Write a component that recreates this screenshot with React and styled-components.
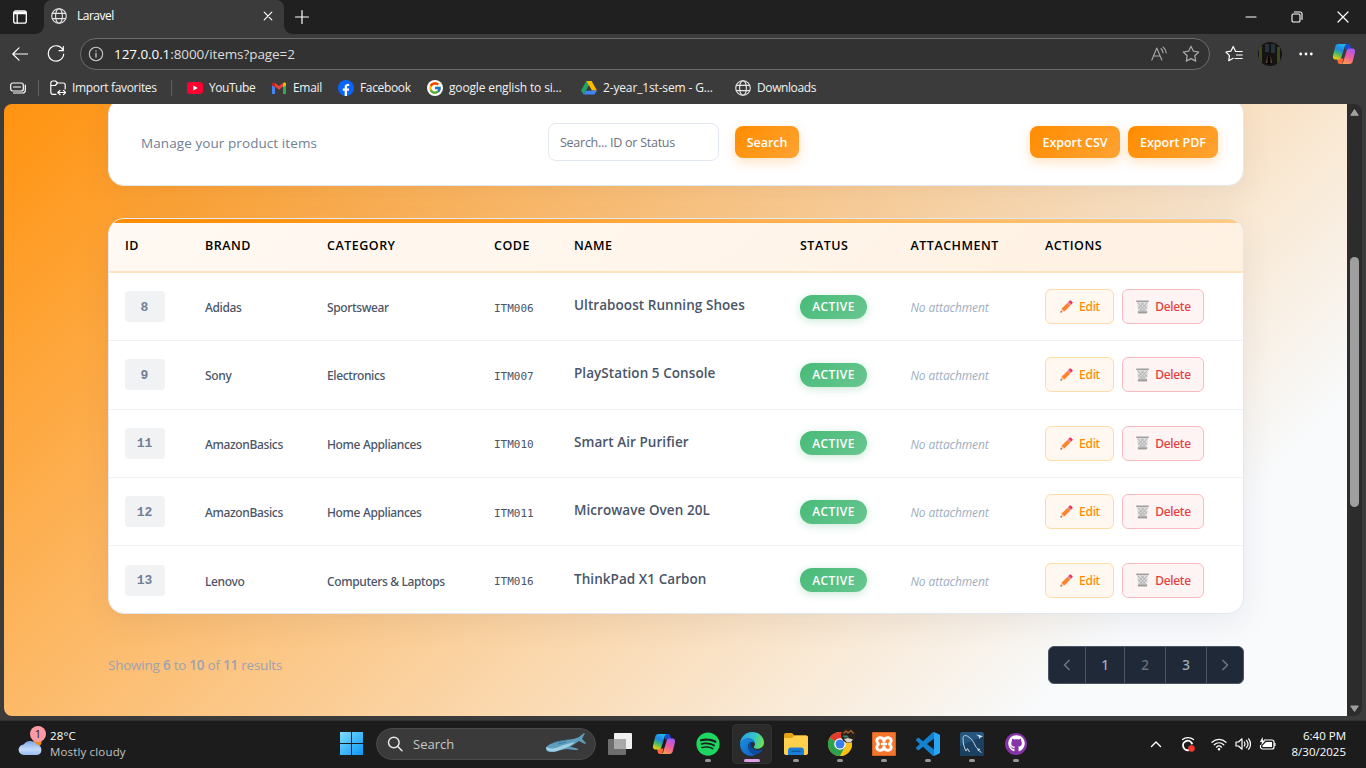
import React from "react";
import styled, { createGlobalStyle, css } from "styled-components";
import { FaSpotify, FaGithub, FaFacebookF } from "react-icons/fa";
import { FcGoogle } from "react-icons/fc";

const Global = createGlobalStyle`
  * { box-sizing: border-box; }
  body { margin: 0; overflow: hidden; background: #3b3b3b; }
  svg { display: block; flex: none; }
`;

const sans = `"Open Sans", "Noto Sans", sans-serif`;
const medium = `"Noto Sans", "Open Sans", sans-serif`;

const Desktop = styled.div`
  width: 1366px;
  height: 768px;
  display: flex;
  flex-direction: column;
  overflow: hidden;
  background: #3b3b3b;
  color: #fff;
  font-family: ${sans};
  font-stretch: 92%;
  font-size: 12px;
  white-space: nowrap;
`;

/* ---------- browser chrome ---------- */

const TitleBar = styled.div`
  height: 34px;
  flex: none;
  display: flex;
  background: #202020;
`;

const Slot = styled.div`
  width: ${(p) => p.$w}px;
  flex: none;
  display: flex;
  align-items: center;
  justify-content: center;
`;

const Tab = styled.div`
  width: 240px;
  display: flex;
  align-items: center;
  padding: 0 10px 2px 7px;
  background: #3b3b3b;
  border-radius: 8px 8px 0 0;
  position: relative;
  &::before,
  &::after {
    content: "";
    position: absolute;
    bottom: 0;
    width: 8px;
    height: 8px;
  }
  &::before {
    left: -8px;
    background: radial-gradient(circle at 0 0, transparent 7.5px, #3b3b3b 8px);
  }
  &::after {
    right: -8px;
    background: radial-gradient(circle at 100% 0, transparent 7.5px, #3b3b3b 8px);
  }
`;

const TabTitle = styled.span`
  flex: 1;
  margin-left: 10px;
  padding-bottom: 2px;
  font-size: 12px;
  letter-spacing: -0.5px;
`;

const Spacer = styled.div`
  flex: 1;
`;

const ToolBar = styled.div`
  height: 40px;
  flex: none;
  display: flex;
  align-items: center;
`;

const AddressBar = styled.div`
  width: 1130px;
  height: 32px;
  display: flex;
  align-items: center;
  border: 1px solid #6c6c6c;
  border-radius: 16px;
  background: #323232;
  padding: 0 9px 0 7px;
`;

const Url = styled.span`
  flex: 1;
  margin-left: 10px;
  font-size: 13.5px;
  letter-spacing: -0.08px;
  color: #dcdcdc;
  b {
    font-weight: 400;
    color: #fff;
  }
`;

const Favorites = styled.div`
  height: 30px;
  flex: none;
  display: flex;
  align-items: center;
  padding-bottom: 3px;
`;

const Favorite = styled.div`
  width: ${(p) => p.$w}px;
  flex: none;
  display: flex;
  align-items: center;
  gap: 6px;
  font-size: 12px;
  color: #f2f2f2;
  letter-spacing: ${(p) => p.$ls || -0.15}px;
`;

const Divider = styled.div`
  width: 1px;
  height: 16px;
  margin: 0 ${(p) => p.$r}px 0 ${(p) => p.$l}px;
  background: #616161;
`;

const FacebookDisc = styled.div`
  width: 16px;
  height: 16px;
  border-radius: 50%;
  background: #0866ff;
  display: flex;
  justify-content: center;
  align-items: flex-end;
`;

const GoogleDisc = styled.div`
  width: 16px;
  height: 16px;
  border-radius: 50%;
  background: #fff;
  display: flex;
  justify-content: center;
  align-items: center;
`;

const Avatar = styled.div`
  width: 24px;
  height: 24px;
  border-radius: 50%;
  overflow: hidden;
`;

/* ---------- page ---------- */

const Window = styled.div`
  height: 612px;
  flex: none;
  margin: 0 4px;
  display: flex;
  border-radius: 8px;
  overflow: hidden;
`;

const Page = styled.div`
  width: 1343px;
  height: 612px;
  overflow: hidden;
  padding: 0 103px 0 104px;
  display: flex;
  flex-direction: column;
  background: linear-gradient(135deg, #ff9310 0%, #f8fafc 84%);
`;

const ScrollTrack = styled.div`
  width: 15px;
  padding: 4px 0 3px;
  display: flex;
  flex-direction: column;
  align-items: center;
  background: #2c2c2c;
`;

const ScrollThumb = styled.div`
  width: 9px;
  height: 250px;
  flex: none;
  margin: 141px 0 198px;
  border-radius: 5px;
  background: #9f9f9f;
`;

const card = css`
  width: 1136px;
  flex: none;
  background: #fff;
  border: 1px solid #e2e8f0;
  border-radius: 16px;
  box-shadow: 0 8px 32px rgba(45, 55, 72, 0.08);
`;

const HeaderCard = styled.section`
  ${card}
  height: 88px;
  margin-top: -6px;
  display: flex;
  align-items: center;
  padding: 0 25px 0 32px;
`;

const Subtitle = styled.p`
  width: 407px;
  margin: 0;
  padding-top: 1px;
  color: #718096;
  font-size: 13.5px;
  letter-spacing: 0.08px;
`;

const SearchField = styled.div`
  width: 171px;
  height: 38px;
  margin-right: 16px;
  padding: 0 11px;
  display: flex;
  align-items: center;
  border: 1px solid #e2e8f0;
  border-radius: 8px;
  color: #6b7280;
  font-size: 12.5px;
  letter-spacing: -0.26px;
`;

const PrimaryButton = styled.button`
  width: ${(p) => p.$w}px;
  height: 32px;
  margin: 0 0 0 ${(p) => p.$ml || 0}px;
  padding: 0;
  border: 0;
  border-radius: 8px;
  background: linear-gradient(135deg, #ff8c00, #ffa333);
  box-shadow: 0 4px 12px rgba(255, 140, 0, 0.25);
  color: #fff;
  font: 600 12.5px ${sans};
  font-stretch: 92%;
  letter-spacing: -0.05px;
`;

const TableCard = styled.section`
  ${card}
  height: 396px;
  margin-top: 32px;
  overflow: hidden;
  display: flex;
  flex-direction: column;
`;

const Accent = styled.div`
  height: 4px;
  flex: none;
  background: linear-gradient(90deg, #ff8c00, #ffa333 40%, #ffcc88);
`;

const rowGrid = css`
  display: grid;
  grid-template-columns: 80px 122px 167px 80px 226px 110.5px 134.5px 1fr;
  align-items: center;
  flex: none;
`;

const HeadRow = styled.div`
  ${rowGrid}
  height: 50px;
  padding-bottom: 3px;
  background: linear-gradient(135deg, #fff9f3, #fff1e2);
  border-bottom: 2px solid #ffe3bf;
  color: #000;
  font-size: 12.5px;
  font-weight: 600;
  letter-spacing: 0.5px;
`;

const Row = styled.div`
  ${rowGrid}
  height: 68.3px;
  border-bottom: 1px solid #f0f3f7;
  &:last-child {
    border-bottom: 0;
  }
`;

const Cell = styled.div`
  padding-left: 16px;
`;

const TextCell = styled(Cell)`
  padding-top: 2px;
  color: #4a5568;
  font-family: ${medium};
  font-size: 12px;
  font-weight: 500;
  letter-spacing: -0.36px;
`;

const CodeCell = styled(Cell)`
  padding-top: 3px;
  color: #4a5568;
  font: 11px "DejaVu Sans Mono", monospace;
`;

const NameCell = styled(Cell)`
  padding-bottom: 3px;
  color: #4a5568;
  font-size: 13.5px;
  font-weight: 600;
  letter-spacing: 0.06px;
`;

const EmptyCell = styled(Cell)`
  padding-top: 2px;
  color: #a0aec0;
  font-size: 12px;
  font-style: italic;
  letter-spacing: -0.1px;
`;

const IdBadge = styled.div`
  width: 40px;
  height: 31px;
  padding: 1px 1px 0 0;
  display: flex;
  align-items: center;
  justify-content: center;
  border-radius: 4px;
  background: #f1f2f4;
  color: #718096;
  font: bold 13px "Liberation Mono", monospace;
`;

const StatusBadge = styled.div`
  width: 67px;
  height: 24px;
  display: flex;
  align-items: center;
  justify-content: center;
  border-radius: 12px;
  background: linear-gradient(135deg, #48bb78, #68c690);
  box-shadow: 0 2px 8px rgba(72, 187, 120, 0.3);
  color: #fff;
  font-size: 12px;
  font-weight: 600;
  letter-spacing: 0.4px;
`;

const Actions = styled(Cell)`
  display: flex;
  gap: 8px;
`;

const ActionButton = styled.button`
  width: ${(p) => (p.$danger ? 82 : 69)}px;
  height: 35px;
  padding: 0 0 0 1px;
  display: flex;
  align-items: center;
  justify-content: center;
  gap: 6px;
  border: 1px solid ${(p) => (p.$danger ? "#f8bcc0" : "#ffdba8")};
  border-radius: 6px;
  background: ${(p) => (p.$danger ? "#fef4f4" : "#fff8f0")};
  color: ${(p) => (p.$danger ? "#e53e3e" : "#ff8c00")};
  font: 500 12px ${medium};
  letter-spacing: -0.3px;
`;

const Footer = styled.div`
  width: 1136px;
  margin-top: 32px;
  display: flex;
  align-items: center;
  justify-content: space-between;
`;

const Showing = styled.p`
  margin: 0;
  color: #9ca3af;
  font-size: 13.5px;
  letter-spacing: -0.24px;
  b {
    font-weight: 600;
  }
`;

const Pager = styled.div`
  height: 38px;
  display: flex;
  border: 1px solid #4b5563;
  border-radius: 6px;
  background: #1f2937;
  overflow: hidden;
`;

const PageCell = styled.div`
  width: ${(p) => p.$w}px;
  display: flex;
  align-items: center;
  justify-content: center;
  border-left: ${(p) => (p.$first ? 0 : 1)}px solid #4b5563;
  color: ${(p) => (p.$dim ? "#6b7280" : "#a3adbb")};
  font-family: ${medium};
  font-size: 13.5px;
  font-weight: 500;
`;

/* ---------- taskbar ---------- */

const Taskbar = styled.div`
  height: 48px;
  flex: none;
  margin-top: 4px;
  padding-bottom: 2px;
  display: flex;
  align-items: center;
  border-top: 1px solid #303030;
  background: #1c1c1c;
`;

const Weather = styled.div`
  width: 330px;
  padding-left: 18px;
  display: flex;
  align-items: center;
  gap: 6px;
`;

const Stack = styled.div`
  display: flex;
  flex-direction: column;
  align-items: ${(p) => (p.$end ? "flex-end" : "flex-start")};
  font-size: 11.5px;
  line-height: 16px;
  letter-spacing: ${(p) => (p.$end ? 0 : 0.16)}px;
  span + span {
    color: ${(p) => (p.$end ? "#fff" : "#c3c3c3")};
  }
`;

const WeatherIcon = styled.div`
  position: relative;
  width: 26px;
  height: 34px;
  padding-top: 11px;
`;

const Badge = styled.span`
  position: absolute;
  left: 12px;
  top: -1px;
  width: 16px;
  height: 16px;
  border-radius: 50%;
  background: #ff99a4;
  color: #1c1c1c;
  text-align: center;
  font-size: 11px;
  line-height: 16px;
`;

const SearchPill = styled.div`
  width: 220px;
  height: 32px;
  margin: 0 3px 0 4px;
  padding: 0 8px 0 10px;
  display: flex;
  align-items: center;
  border-radius: 16px;
  border: 1px solid #4a4a4a;
  background: #3a3a3a;
  color: #c8c8c8;
  font-size: 13px;
  span {
    flex: 1;
    margin-left: 10px;
  }
`;

const AppButton = styled.div`
  width: 40px;
  height: 40px;
  margin: 0 2px;
  flex: none;
  display: flex;
  flex-direction: column;
  align-items: center;
  justify-content: flex-end;
  border-radius: 5px;
  ${(p) =>
    p.$active &&
    css`
      background: #2b2b2b;
      box-shadow: inset 0 0 0 1px #333;
    `}
`;

const Glyph = styled.div`
  height: 24px;
  display: flex;
  align-items: center;
  justify-content: center;
  margin-bottom: 3px;
`;

const Mark = styled.div`
  width: ${(p) => (p.$active ? 16 : 6)}px;
  height: 3px;
  margin-bottom: 2px;
  border-radius: 2px;
  background: ${(p) => (p.$active ? "#e0a0e4" : "#979797")};
`;

const Tray = styled.div`
  display: flex;
  align-items: center;
  margin-right: 20px;
`;

const GithubDisc = styled.div`
  width: 22px;
  height: 22px;
  border-radius: 50%;
  background: #8534a8;
  display: flex;
  align-items: center;
  justify-content: center;
`;

/* ---------- drawings ---------- */

const Line = ({ size = 16, w = 1.2, color = "#fff", children, vb = 16 }) => (
  <svg width={size} height={size} viewBox={`0 0 ${vb} ${vb}`} fill="none" stroke={color}
    strokeWidth={w} strokeLinecap="round" strokeLinejoin="round">
    {children}
  </svg>
);

const Globe = ({ color = "#e6e6e6" }) => (
  <Line color={color} w={1.1}>
    <circle cx="8" cy="8" r="7.3" />
    <ellipse cx="8" cy="8" rx="3.4" ry="7.3" />
    <path d="M1.4 5.4h13.2M1.4 10.6h13.2" />
  </Line>
);

const Copilot = ({ size = 24, id }) => (
  <svg width={size} height={size} viewBox="0 0 24 24">
    <defs>
      <linearGradient id={`${id}a`} x1="0.6" y1="0" x2="0.2" y2="1">
        <stop offset="0" stopColor="#1bb6ee" />
        <stop offset=".35" stopColor="#1e86e6" />
        <stop offset=".62" stopColor="#42b96e" />
        <stop offset="1" stopColor="#ffd000" />
      </linearGradient>
      <linearGradient id={`${id}b`} x1="0.7" y1="0" x2="0.3" y2="1">
        <stop offset="0" stopColor="#a45af5" />
        <stop offset=".5" stopColor="#ee5aa0" />
        <stop offset="1" stopColor="#ff9a4a" />
      </linearGradient>
    </defs>
    <path d="M12.500 2h3.700c1.200 0 1.800.7 2.100 1.600L19.400 7.500H13z" fill="#1c49cf" />
    <path d="M5 16.500h6.500L10 22H7.800c-1.100 0-1.700-.7-2-1.700z" fill="#ff6a3c" />
    <path d="M6.300 2H15c-1.200 0-1.800.8-2.200 2L9.300 15.500c-.4 1.200-1.200 2-2.500 2H3.500C1.300 17.500.6 15.600 1 13.800L3.300 4.500C3.700 3 4.800 2 6.300 2z" fill={`url(#${id}a)`} />
    <path d="M17.700 22H9c1.200 0 1.800-.8 2.200-2l3.500-11.500c.4-1.200 1.200-2 2.500-2h3.300c2.200 0 2.900 1.900 2.500 3.700l-2.300 9.300c-.4 1.500-1.500 2.500-3 2.500z" fill={`url(#${id}b)`} />
  </svg>
);

const Pencil = () => (
  <svg width="13" height="13" viewBox="0 0 15 15">
    <path d="M.5 14.500l1.200-4.500L5 13.300z" fill="#f7c9a0" />
    <path d="M.5 14.500l.5-2 1.500 1.500z" fill="#444" />
    <path d="M1.700 10l6.800-6.600 3.200 3.200L5 13.300z" fill="#ff822d" />
    <path d="M8.500 3.400l1.300-1.300 3.200 3.200-1.300 1.300z" fill="#d98a9a" />
    <path d="M9.800 2.100L11 .9c.6-.6 1.200-.6 1.800 0l1.400 1.400c.6.600.6 1.200 0 1.800L13 5.300z" fill="#f2315f" />
  </svg>
);

const Trash = () => (
  <svg width="13" height="14" viewBox="0 0 13 14">
    <path d="M1.200 1.800h10.600l-.9 11H2.100z" fill="#dedede" />
    <path d="M1.500 2.500l8.500 9M5 2.500l6 6M2 6.500l5 5M11.500 2.500L3 11.500M8 2.500L2.500 8.500M11 6.500l-5 5" stroke="#a6a6a6" strokeWidth=".8" />
    <path d="M.2.500h12.600V2H.2z" fill="#a0a0a0" />
    <path d="M1.900 11.400h9.200v2H1.900z" fill="#9b9b9b" />
  </svg>
);

const Edge = () => (
  <svg width="24" height="24" viewBox="0 0 24 24">
    <defs>
      <linearGradient id="eg1" x1="0" y1=".3" x2="1" y2=".5">
        <stop offset="0" stopColor="#2a9fe6" />
        <stop offset=".55" stopColor="#33c4cf" />
        <stop offset="1" stopColor="#6ee04f" />
      </linearGradient>
      <linearGradient id="eg2" x1="0" y1="0" x2="1" y2="1">
        <stop offset="0" stopColor="#1b8fe0" />
        <stop offset="1" stopColor="#0f5fc0" />
      </linearGradient>
    </defs>
    <path d="M0 12C.3 5 5.500 0 12 0c7 0 12 5 12 10.500 0 3.800-3 6.300-6.500 6.300-2.300 0-3.800-.8-3.800-1.600 0-.6 1.300-1.200 1.300-3.200C15 9 12 6.500 8.500 6.500 4 6.500.8 9.200 0 12z" fill="url(#eg1)" />
    <path d="M0 12c.8-3.500 4-5.800 8.300-5.800 3.800 0 6.500 2.400 6.700 5.400-.9-1.300-2.300-1.800-3.500-1.500-2.700.6-4.200 3.400-3 6.900 1.200 3.600 4.300 5.300 7.300 5.300-1.200 1.200-3 1.700-4.300 1.700C5 24 0 19 0 12z" fill="url(#eg2)" />
    <path d="M8.200 14c.2-2.300 1.600-3.700 3.200-3.900-1.300 2-.7 5 1.800 6.700 3 2 6.200 1.500 8.600.5.600-.3 1 .2.600.7-2 3-4.700 4.600-7.500 4.500-4.200-.2-7-4.200-6.700-8.500z" fill="#0c4b9e" />
  </svg>
);

const Folder = () => (
  <svg width="24" height="22" viewBox="0 0 24 22">
    <path d="M0 2C0 .8.800 0 2 0h6l2.500 2.500H22c1.200 0 2 .8 2 2V8H0z" fill="#e6a214" />
    <path d="M0 5h8l2.500-2.500H22c1.200 0 2 .8 2 2V20c0 1.200-.8 2-2 2H2c-1.200 0-2-.8-2-2z" fill="#ffd04c" />
    <path d="M4 22v-4.500C4 15.500 5.200 14.500 7 14.500h10c1.800 0 3 1 3 3V22z" fill="#1a7fd4" />
    <path d="M8 18.300h8" stroke="#0b5ca8" strokeWidth="1.500" strokeLinecap="round" />
  </svg>
);

const Chrome = () => (
  <svg width="32" height="32" viewBox="0 0 32 32">
    <g transform="translate(4 4)">
      <circle cx="12" cy="12" r="12" fill="#fbc116" />
      <path d="M12 12L1.600 6A12 12 0 0 1 22.400 6z" fill="#e33b2e" />
      <path d="M1.600 6A12 12 0 0 0 12 24l5.200-9-5.200-3z" fill="#2da14c" />
      <path d="M12 6.500h10.700A12 12 0 0 1 12 24l4.900-9z" fill="#fbc116" />
      <circle cx="12" cy="12" r="5.800" fill="#fff" />
      <circle cx="12" cy="12" r="4.500" fill="#3b7ded" />
    </g>
    <circle cx="24.500" cy="7.500" r="7.500" fill="#2a2019" />
    <path d="M19.500 5.500l2.500-2.500 2 2 3-2.500 2.500 3" stroke="#b06a2c" strokeWidth="1.200" fill="none" />
    <path d="M18.500 7.500h4.500l2 2h-5z" fill="#3c8f6d" />
    <path d="M20 11l4-1 5 1.500-2.500 3h-3.500z" fill="#d9d5cc" />
  </svg>
);

const Xampp = () => (
  <svg width="24" height="24" viewBox="0 0 24 24">
    <rect width="24" height="24" rx="1.500" fill="#f3762d" />
    <rect x=".5" y=".5" width="23" height="23" rx="1" fill="none" stroke="#d9611f" />
    <path d="M12 9.200C12 4.800 4.800 4.500 4.800 8.700c0 1.800 1.500 2.100 1.500 3.300s-1.500 1.500-1.500 3.300c0 4.200 7.200 3.900 7.200-.5 0 4.400 7.200 4.700 7.200.5 0-1.800-1.500-2.100-1.500-3.300s1.500-1.500 1.500-3.300c0-4.200-7.200-3.900-7.200.5z" fill="none" stroke="#fff" strokeWidth="3" strokeLinejoin="round" />
    <path d="M10 12h4" stroke="#fff" strokeWidth="2.600" strokeLinecap="round" />
  </svg>
);

const VsCode = () => (
  <svg width="24" height="24" viewBox="0 0 24 24">
    <path fill="#1283d0" d="M23.150 2.587L18.210.210a1.494 1.494 0 0 0-1.705.290l-9.460 8.630-4.120-3.128a.999.999 0 0 0-1.276.057L.327 7.261A1 1 0 0 0 .326 8.740L3.899 12 .326 15.260a1 1 0 0 0 .001 1.479L1.650 17.940a.999.999 0 0 0 1.276.057l4.120-3.128 9.460 8.630a1.492 1.492 0 0 0 1.704.290l4.942-2.377A1.500 1.500 0 0 0 24 20.060V3.939a1.500 1.500 0 0 0-.850-1.352zm-5.146 14.861L10.826 12l7.178-5.448v10.896z" />
    <path fill="#2ba4f2" d="M23.150 2.587L18.210.210c-.1-.1-.2-.1-.206 0v23.580l.206 0 4.940-2.377A1.500 1.500 0 0 0 24 20.060V3.939a1.500 1.500 0 0 0-.850-1.352z" />
  </svg>
);

const Workbench = () => (
  <svg width="24" height="24" viewBox="0 0 24 24">
    <rect width="24" height="24" rx="2" fill="#24567f" />
    <path d="M0 14L24 4v18a2 2 0 0 1-2 2H2a2 2 0 0 1-2-2z" fill="#1a4062" />
    <path d="M6 19C4 15.500 3 11 3 6.500 3 3.500 5 3 7.500 4.200c4 2.300 6.500 6 8 10 .8 2 2.500 2.600 4.500 3.300l-2.500.3 4 2.700M6 19l1.500-2.500L9.500 20" fill="none" stroke="#d5e2ec" strokeWidth=".9" />
    <path d="M16 2.500l3 2.200v2.600l1.500-2L23 5l-2-1.500z" fill="#d5e2ec" />
  </svg>
);

const Shark = () => (
  <svg width="42" height="22" viewBox="0 0 42 22">
    <path d="M1 15c1-3 6-5 11-6l9-2c5-1 9-1 13-3l5-4c1 0 1 1 0 2l-2 4 4 4c0 1-2 1-3 0l-4-2-6 4-3 2c3 0 6 1 8 2 1 1-1 1-3 1l-8-1-6 1c-5 2-11 3-14 1-1-1-1-2-1-3z" fill="#5f9fbd" />
    <path d="M1 14c4 2 9 2 15-1 3-1 9-3 14-4-5 5-13 7-18 9-5 1-11 1-11-4z" fill="#9fd0e2" />
    <path d="M8 10c4-2 9-2 14-3M13 11l8-2" stroke="#3f7c9d" strokeWidth="1" fill="none" />
  </svg>
);

const Cloud = () => (
  <svg width="26" height="18" viewBox="0 0 26 18">
    <defs>
      <linearGradient id="cl" x1="0" y1="0" x2="0" y2="1">
        <stop offset="0" stopColor="#7fa6e8" />
        <stop offset=".6" stopColor="#c3dafb" />
        <stop offset="1" stopColor="#9abcf2" />
      </linearGradient>
    </defs>
    <circle cx="19.500" cy="4" r="4" fill="#f08a1d" />
    <path d="M6 17a5.200 5.200 0 0 1-.4-10.400A7.500 7.500 0 0 1 18.500 6.500 5.300 5.300 0 0 1 19 17z" fill="url(#cl)" />
  </svg>
);

const Windows = () => (
  <svg width="23" height="23" viewBox="0 0 23 23">
    <defs>
      <linearGradient id="wn" x1="0" y1="0" x2="1" y2="1">
        <stop offset="0" stopColor="#7fdcfc" />
        <stop offset="1" stopColor="#0a96f8" />
      </linearGradient>
    </defs>
    <path d="M0 0h11v11H0zM12 0h11v11H12zM0 12h11v11H0zM12 12h11v11H12z" fill="url(#wn)" />
  </svg>
);

const TaskView = () => (
  <svg width="24" height="22" viewBox="0 0 24 22">
    <rect x="6" y="0" width="18" height="16" rx="1" fill="#f0f0f0" />
    <rect x="0" y="6" width="18" height="16" rx="1" fill="#6e6e6e" />
    <rect x="6" y="6" width="12" height="10" fill="#a9a9a9" />
  </svg>
);

const YouTube = () => (
  <svg width="16" height="12" viewBox="0 0 16 12">
    <rect width="16" height="12" rx="3" fill="#ff0033" />
    <path d="M6.300 3.400v5.200L10.700 6z" fill="#fff" />
  </svg>
);

const Gmail = () => (
  <svg width="16" height="12" viewBox="0 0 16 12">
    <path d="M1 12V1.500L4 4v8z" fill="#4285f4" />
    <path d="M12 12V4l3-2.500V12z" fill="#34a853" />
    <path d="M4 4.500v-3.500l4 3 4-3v3.500l-4 3.200z" fill="#ea4335" />
    <path d="M1 2.500C.8.500 2.500-.2 4 1v4L1 3.500z" fill="#c5221f" />
    <path d="M15 2.500C15.200.500 13.500-.2 12 1v4l3-1.500z" fill="#fbbc04" />
  </svg>
);

const Drive = () => (
  <svg width="16" height="14" viewBox="0 0 16 14">
    <path d="M5.400 0h5.200L5 9.500l-2.500 4L0 9.500z" fill="#1ea362" />
    <path d="M5.400 0h5.200L16 9.500h-5.200z" fill="#ffba00" />
    <path d="M2.500 13.500L5 9.500h11l-2.500 4z" fill="#4285f4" />
    <path d="M8 4.600l2.800 4.900H5.200z" fill="#3b3b3b" />
  </svg>
);

const Star = ({ color = "#fff", list }) => (
  <Line size={18} vb={18} color={color} w={1.200}>
    {list ? (
      <path d="M10.500 6.300L8.200 1.500 5.900 6.200.9 7l3.600 3.600-.8 5.100 4.500-2.400M10.500 6.500h6.700M11.500 10h5.700M10 13.500h7.200" />
    ) : (
      <path d="M9 1.300l2.400 4.900 5.300.8-3.900 3.800.9 5.300L9 13.600l-4.700 2.500.9-5.300L1.300 7l5.300-.8z" />
    )}
  </Line>
);

const items = [
  ["8", "Adidas", "Sportswear", "ITM006", "Ultraboost Running Shoes"],
  ["9", "Sony", "Electronics", "ITM007", "PlayStation 5 Console"],
  ["11", "AmazonBasics", "Home Appliances", "ITM010", "Smart Air Purifier"],
  ["12", "AmazonBasics", "Home Appliances", "ITM011", "Microwave Oven 20L"],
  ["13", "Lenovo", "Computers & Laptops", "ITM016", "ThinkPad X1 Carbon"],
];

const columns = ["ID", "BRAND", "CATEGORY", "CODE", "NAME", "STATUS", "ATTACHMENT", "ACTIONS"];

const apps = [
  { id: "spotify", icon: <FaSpotify size={24} color="#1ed760" /> },
  { id: "edge", icon: <Edge />, active: true },
  { id: "files", icon: <Folder /> },
  { id: "chrome", icon: <Chrome /> },
  { id: "xampp", icon: <Xampp /> },
  { id: "code", icon: <VsCode /> },
  { id: "workbench", icon: <Workbench /> },
  { id: "github", icon: <GithubDisc><FaGithub size={17} color="#fff" /></GithubDisc> },
];

export default function App() {
  return (
    <Desktop>
      <Global />
      <TitleBar>
        <Slot $w={40}>
          <Line w={1.300}>
            <rect x="1.700" y="2" width="12.600" height="12.200" rx="2" />
            <path d="M2 4.700h12M2.500 3.500h11M5.200 5v9" />
          </Line>
        </Slot>
        <Slot $w={4} />
        <Tab>
          <Globe />
          <TabTitle>Laravel</TabTitle>
          <Line size={12} vb={12} w={1.200}><path d="M2.200 2.200l7.600 7.600M9.800 2.200L2.200 9.800" /></Line>
        </Tab>
        <Slot $w={35}>
          <Line><path d="M8 1.500v13M1.500 8h13" /></Line>
        </Slot>
        <Spacer />
        <Slot $w={46}><Line size={12} vb={12}><path d="M1 6h10" /></Line></Slot>
        <Slot $w={46}>
          <Line size={12} vb={12} w={1.100}>
            <rect x="1" y="3" width="8" height="8" rx="1.300" />
            <path d="M3.300 1h5.700a2 2 0 0 1 2 2v5.500" />
          </Line>
        </Slot>
        <Slot $w={46}><Line size={12} vb={12}><path d="M1 1l10 10M11 1L1 11" /></Line></Slot>
      </TitleBar>

      <ToolBar>
        <Slot $w={40}>
          <Line><path d="M.800 8h15M7 1.800L.800 8 7 14.200" /></Line>
        </Slot>
        <Slot $w={32}>
          <Line size={18} vb={18}><path d="M16 5.200A7.700 7.700 0 1 0 16.700 9M16.300 1.500v4.200h-4.200" /></Line>
        </Slot>
        <Slot $w={8} />
        <AddressBar>
          <Line color="#c9c9c9" w={1.100}>
            <circle cx="8" cy="8" r="6.700" />
            <path d="M8 7.300v3.700M8 5v.2" strokeWidth="1.300" />
          </Line>
          <Url><b>127.0.0.1</b>:8000/items?page=2</Url>
          <Slot $w={46}>
            <Line color="#a9a9a9" w={1.100}>
              <path d="M.8 14L5.800 2 10.800 14M2.400 10h6.800M10 2.700c1.200.9 1.800 2.300 1.900 3.900M12 1c1.800 1.400 2.900 3.400 3.200 5.900" />
            </Line>
          </Slot>
          <Star color="#a9a9a9" />
        </AddressBar>
        <Slot $w={48}><Star list /></Slot>
        <Slot $w={24}>
          <Avatar>
            <svg width="24" height="24" viewBox="0 0 24 24">
              <rect width="24" height="24" fill="#151412" />
              <path d="M1 4h3v18H1zM19 5h3v16h-3z" fill="#3c4a1e" />
              <path d="M7 2h4v8H7zM13 2h4v9h-4z" fill="#27333a" />
              <path d="M8 21c.5-5 1.500-7 3-8 1.500 1 2.500 3 3 8z" fill="#6b4630" />
              <path d="M9.500 22v-6l1.500-4 1.500 4v6z" fill="#050505" />
            </svg>
          </Avatar>
        </Slot>
        <Slot $w={48}>
          <svg width="14" height="4" viewBox="0 0 14 4" fill="#fff">
            <circle cx="1.700" cy="2" r="1.400" /><circle cx="7" cy="2" r="1.400" /><circle cx="12.300" cy="2" r="1.400" />
          </svg>
        </Slot>
        <Slot $w={28}><Copilot id="top" /></Slot>
      </ToolBar>

      <Favorites>
        <Slot $w={36}>
          <Line>
            <rect x=".700" y="3" width="12.600" height="8" rx="2" />
            <path d="M3.500 7h7M15.300 5v5.500a2.500 2.500 0 0 1-2.500 2.500H3.500" />
          </Line>
        </Slot>
        <Divider $l={2} $r={11} />
        <Favorite $w={109} $ls={-0.33}>
          <Line>
            <path d="M6 14.300H2.800a2 2 0 0 1-2-2V3a2 2 0 0 1 2-2h2.700l2 2h5.700a2 2 0 0 1 2 2v4M.8 5.500h4.500L7.500 3M8 12.500h7.500M10 10.300l-2.200 2.200L10 14.700M13.500 10.300l2.200 2.200-2.200 2.200" />
          </Line>
          Import favorites
        </Favorite>
        <Divider $l={12} $r={15} />
        <Favorite $w={84} $ls={-0.45}><YouTube />YouTube</Favorite>
        <Favorite $w={67} $ls={-0.3}><Gmail />Email</Favorite>
        <Favorite $w={89} $ls={-0.35}>
          <FacebookDisc><FaFacebookF size={12} color="#fff" /></FacebookDisc>Facebook
        </Favorite>
        <Favorite $w={154}>
          <GoogleDisc><FcGoogle size={14} /></GoogleDisc>google english to si...
        </Favorite>
        <Favorite $w={154}><Drive />2-year_1st-sem - G...</Favorite>
        <Favorite $w={100} $ls={-0.4}><Globe />Downloads</Favorite>
      </Favorites>

      <Window>
        <Page>
          <HeaderCard>
            <Subtitle>Manage your product items</Subtitle>
            <SearchField>Search... ID or Status</SearchField>
            <PrimaryButton $w={64}>Search</PrimaryButton>
            <Spacer />
            <PrimaryButton $w={90}>Export CSV</PrimaryButton>
            <PrimaryButton $w={90} $ml={8}>Export PDF</PrimaryButton>
          </HeaderCard>

          <TableCard>
            <Accent />
            <HeadRow>
              {columns.map((c) => <Cell key={c}>{c}</Cell>)}
            </HeadRow>
            {items.map(([id, brand, category, code, name]) => (
              <Row key={id}>
                <Cell><IdBadge>{id}</IdBadge></Cell>
                <TextCell>{brand}</TextCell>
                <TextCell>{category}</TextCell>
                <CodeCell>{code}</CodeCell>
                <NameCell>{name}</NameCell>
                <Cell><StatusBadge>ACTIVE</StatusBadge></Cell>
                <EmptyCell>No attachment</EmptyCell>
                <Actions>
                  <ActionButton><Pencil />Edit</ActionButton>
                  <ActionButton $danger><Trash />Delete</ActionButton>
                </Actions>
              </Row>
            ))}
          </TableCard>

          <Footer>
            <Showing>Showing <b>6</b> to <b>10</b> of <b>11</b> results</Showing>
            <Pager>
              <PageCell $w={36} $first>
                <Line size={12} vb={12} w={1.700} color="#6b7280"><path d="M8 1.500L3.500 6 8 10.500" /></Line>
              </PageCell>
              <PageCell $w={39}>1</PageCell>
              <PageCell $w={41} $dim>2</PageCell>
              <PageCell $w={41}>3</PageCell>
              <PageCell $w={37}>
                <Line size={12} vb={12} w={1.700} color="#6b7280"><path d="M4 1.500L8.500 6 4 10.500" /></Line>
              </PageCell>
            </Pager>
          </Footer>
        </Page>
        <ScrollTrack>
          <svg width="9" height="8" viewBox="0 0 9 8">
            <path d="M4.500 1.500L8.300 7.300H.7z" fill="#9f9f9f" stroke="#9f9f9f" strokeLinejoin="round" />
          </svg>
          <ScrollThumb />
          <svg width="9" height="8" viewBox="0 0 9 8">
            <path d="M4.500 6.500L.7 1h7.600z" fill="#9f9f9f" stroke="#9f9f9f" strokeLinejoin="round" />
          </svg>
        </ScrollTrack>
      </Window>

      <Taskbar>
        <Weather>
          <WeatherIcon><Cloud /><Badge>1</Badge></WeatherIcon>
          <Stack><span>28°C</span><span>Mostly cloudy</span></Stack>
        </Weather>
        <Slot $w={42}><Windows /></Slot>
        <SearchPill>
          <Line w={1.500} color="#e8e8e8"><circle cx="6.800" cy="6.500" r="5.300" /><path d="M10.800 10.500l4.200 4.300" /></Line>
          <span>Search</span>
          <Shark />
        </SearchPill>
        <Slot $w={42}><TaskView /></Slot>
        <Slot $w={45}><Copilot id="task" size={24} /></Slot>
        {apps.map((a) => (
          <AppButton key={a.id} $active={a.active}>
            <Glyph>{a.icon}</Glyph>
            <Mark $active={a.active} />
          </AppButton>
        ))}
        <Spacer />
        <Tray>
          <Slot $w={32}><Line size={12} vb={12} w={1.400}><path d="M1.500 8.500L6 4l4.500 4.500" /></Line></Slot>
          <Slot $w={32}>
            <svg width="16" height="18" viewBox="0 0 16 18" fill="none" stroke="#fff" strokeLinecap="round">
              <path d="M2.500 4.500c3-2.500 8-2.500 11 0" strokeWidth="1.300" />
              <path d="M12 8.500A4.700 4.700 0 1 0 9 15" strokeWidth="1.900" />
              <circle cx="11.500" cy="13.500" r="3.300" fill="#f03a2f" stroke="none" />
            </svg>
          </Slot>
          <Slot $w={31}>
            <Line><path d="M1 6.300c4-3.800 10-3.800 14 0M3.200 8.800c2.800-2.600 6.800-2.600 9.600 0M5.400 11.200c1.500-1.400 3.700-1.400 5.200 0" /><circle cx="8" cy="13.300" r=".7" fill="#fff" /></Line>
          </Slot>
          <Slot $w={16}>
            <Line><path d="M1 6v4h2.500L7 13.200V2.800L3.500 6zM9.300 6c.8 1.200.8 2.800 0 4M11.500 4.300c1.800 2.200 1.800 5.200 0 7.400M13.600 2.800c2.500 3 2.500 7.400 0 10.400" /></Line>
          </Slot>
          <Slot $w={33}>
            <svg width="17" height="14" viewBox="0 0 17 14">
              <path d="M5 3h8a2 2 0 0 1 2 2v5a2 2 0 0 1-2 2H3.500a2 2 0 0 1-2-2V8" fill="none" stroke="#fff" strokeWidth="1.200" />
              <path d="M3.500 8.500L7 5h6v5H3.500zM15.300 6h1.200v3h-1.200zM3.500 0L1 5h2l-.8 3.500L6.500 3.500H4z" fill="#fff" />
            </svg>
          </Slot>
          <Slot $w={8} />
          <Stack $end><span>6:40 PM</span><span>8/30/2025</span></Stack>
        </Tray>
      </Taskbar>
    </Desktop>
  );
}
